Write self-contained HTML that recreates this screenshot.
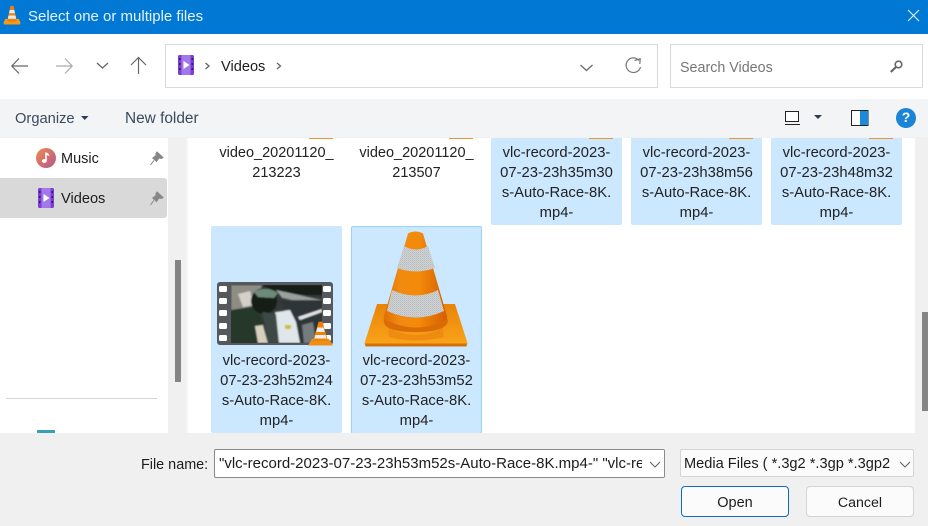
<!DOCTYPE html>
<html><head><meta charset="utf-8"><style>
html,body{margin:0;padding:0}
body{width:928px;height:526px;position:relative;overflow:hidden;background:#fff;font-family:"Liberation Sans",sans-serif;color:#1c1c1c;font-size:14.500px}
.a{position:absolute}
.t{position:absolute;white-space:nowrap;line-height:20px}
.tile{position:absolute;background:#cce8ff;border-radius:2px}
.c{position:absolute;width:131px;text-align:center;line-height:20px;font-size:14.800px;white-space:nowrap;color:#222}
svg{position:absolute;overflow:visible}
</style></head><body>
<div class="a" style="left:0;top:0;width:928px;height:34px;background:#0078d4"></div>
<svg style="left:0;top:0" width="928" height="34">
<path d="M8 19 L5 19 L3.500 23 L4 24.500 L20 24.500 L20.500 23 L19 19 L16 19Z" fill="#f39a1a"/><path d="M10.500 6 Q12 5.400 13.500 6 L16.800 21 Q12 23 7.200 21Z" fill="#f08208"/><path d="M9.700 10 L14.300 10 L15 13.200 L9 13.200Z M8.500 15.500 L15.500 15.500 L16.200 18.800 L7.800 18.800Z" fill="#e9e9e9"/>
<path d="M908 10 L919 21 M919 10 L908 21" stroke="#e8f3fb" stroke-width="1.100" fill="none"/></svg>
<div class="t" style="left:28px;top:7px;color:#e6f2fb;font-size:15px">Select one or multiple files</div>

<svg style="left:0;top:34px" width="170" height="65">
<path d="M12 32 H28 M19 24.500 L11.800 32 L19 39.500" stroke="#666" stroke-width="1.200" fill="none"/>
<path d="M56 32 H72 M65 24.500 L72.200 32 L65 39.500" stroke="#aaa" stroke-width="1.200" fill="none"/>
<path d="M97 29 L102.500 34 L108 29" stroke="#666" stroke-width="1.300" fill="none"/>
<path d="M138.500 40 V24 M131 31 L138.500 23.500 L146 31" stroke="#666" stroke-width="1.200" fill="none"/></svg>
<div class="a" style="left:165px;top:44px;width:491px;height:42px;border:1px solid #d9d9d9"></div>
<svg style="left:178px;top:55px" width="16" height="20"><rect width="16" height="20" rx="1.500" fill="#7c3fd6"/><rect x="3.500" width="9" height="20" fill="#a578ea"/><path d="M5.500 6 L11.500 10 L5.500 14Z" fill="#fff"/><path d="M1 3h1.500v2H1zM1 8h1.500v2H1zM1 13h1.500v2H1zM13.500 3h1.500v2h-1.500zM13.500 8h1.500v2h-1.500zM13.500 13h1.500v2h-1.500z" fill="#2e1a66"/></svg>
<svg style="left:200px;top:56px" width="90" height="20"><path d="M5.500 7 L9 10 L5.500 13" stroke="#666" stroke-width="1.300" fill="none"/><path d="M77 7 L80.500 10 L77 13" stroke="#666" stroke-width="1.300" fill="none"/></svg>
<div class="t" style="left:221px;top:57px;font-size:14.600px">Videos</div>
<svg style="left:575px;top:53px" width="70" height="28"><path d="M5.500 12 L11.500 17.500 L17.500 12" stroke="#666" stroke-width="1.200" fill="none"/><path d="M64 7.500 A7.300 7.300 0 1 0 65.500 14" stroke="#777" stroke-width="1.200" fill="none"/><path d="M59.500 7.500 L65.200 5.800 L64.800 11" stroke="#777" stroke-width="1.200" fill="none"/></svg>
<div class="a" style="left:670px;top:44px;width:251px;height:42px;border:1px solid #d9d9d9"></div>
<div class="t" style="left:680px;top:58px;color:#767676;font-size:14.300px">Search Videos</div>
<svg style="left:888px;top:58px" width="18" height="18"><circle cx="10.500" cy="6.500" r="3.300" stroke="#666" stroke-width="1.600" fill="none"/><path d="M8 9 L2.800 14" stroke="#666" stroke-width="2.200"/></svg>

<div class="a" style="left:0;top:99px;width:928px;height:38px;background:#f3f4f6"></div>
<div class="t" style="left:15px;top:109px;color:#3b4a5c;font-size:14.700px">Organize</div>
<svg style="left:80px;top:115px" width="10" height="6"><path d="M1 1 H8.500 L4.750 5Z" fill="#2b3a55"/></svg>
<div class="t" style="left:125px;top:109px;color:#3b4a5c;font-size:15.400px">New folder</div>
<svg style="left:784px;top:109px" width="130" height="22">
<rect x="1.500" y="2.500" width="13" height="10" fill="#fff" stroke="#222"/><path d="M1 15.500 H16" stroke="#222"/>
<path d="M30 6 H38 L34 10Z" fill="#2b3a55"/>
<rect x="67.500" y="1.500" width="16.500" height="15" fill="#fff" stroke="#222"/><rect x="76" y="2" width="8" height="14" fill="#1c8ad8"/>
<circle cx="122" cy="9" r="10" fill="#1a84d6"/></svg>
<div class="t" style="left:901px;top:107px;width:10px;text-align:center;color:#fff;font-size:14px;font-weight:bold">?</div>

<div class="a" style="left:168px;top:137px;width:20px;height:296px;background:#f0f0f0"></div>
<div class="a" style="left:186px;top:137px;width:2px;height:296px;background:#f6f6f6"></div>
<div class="a" style="left:175px;top:260px;width:6px;height:122px;background:#858585"></div>
<div class="a" style="left:0;top:178px;width:167px;height:40px;background:#d9d9d9;border-radius:0 3px 3px 0"></div>
<svg style="left:36px;top:148px" width="20" height="20"><defs><linearGradient id="m" x1="0" y1="0" x2="1" y2="1"><stop offset="0" stop-color="#ef8a4e"/><stop offset="1" stop-color="#b4578f"/></linearGradient></defs><circle cx="10" cy="10" r="10" fill="url(#m)"/><path d="M10 4.500 V12.500" stroke="#fff" stroke-width="1.600"/><ellipse cx="8.300" cy="13" rx="2.400" ry="1.900" fill="#fff"/><path d="M10 4.500 Q13 5 13.500 8 L10.500 7Z" fill="#fff"/></svg>
<div class="t" style="left:61px;top:149px;font-size:14.500px">Music</div>
<svg style="left:149px;top:151px" width="16" height="16"><path d="M8 1 L14 6.500 L12.500 7.500 L10 7 L7.500 10.500 L3.800 7 L7 4.500 L7 2.500Z M4.800 9.500 L1.500 14" fill="#878787" stroke="#878787" stroke-width="1"/></svg>
<svg style="left:38px;top:188px" width="16" height="20"><rect width="16" height="20" rx="1.500" fill="#7c3fd6"/><rect x="3.500" width="9" height="20" fill="#a578ea"/><path d="M5.500 6 L11.500 10 L5.500 14Z" fill="#fff"/><path d="M1 3h1.500v2H1zM1 8h1.500v2H1zM1 13h1.500v2H1zM13.500 3h1.500v2h-1.500zM13.500 8h1.500v2h-1.500zM13.500 13h1.500v2h-1.500z" fill="#2e1a66"/></svg>
<div class="t" style="left:61px;top:189px;font-size:14.600px">Videos</div>
<svg style="left:149px;top:191px" width="16" height="16"><path d="M8 1 L14 6.500 L12.500 7.500 L10 7 L7.500 10.500 L3.800 7 L7 4.500 L7 2.500Z M4.800 9.500 L1.500 14" fill="#878787" stroke="#878787" stroke-width="1"/></svg>
<div class="a" style="left:6px;top:398px;width:151px;height:1px;background:#d4d4d4"></div>
<div class="a" style="left:37px;top:430px;width:18px;height:3px;background:#3a9fb5"></div>

<div class="tile" style="left:491px;top:137px;width:131px;height:88px"></div>
<div class="tile" style="left:631px;top:137px;width:131px;height:88px"></div>
<div class="tile" style="left:771px;top:137px;width:131px;height:88px"></div>
<div class="a" style="left:309px;top:137px;width:24px;height:2px;background:#e8983a"></div>
<div class="a" style="left:449px;top:137px;width:24px;height:2px;background:#e8983a"></div>
<div class="a" style="left:589px;top:137px;width:24px;height:2px;background:#e8983a"></div>
<div class="a" style="left:729px;top:137px;width:24px;height:2px;background:#e8983a"></div>
<div class="a" style="left:869px;top:137px;width:24px;height:2px;background:#e8983a"></div>

<div class="c" style="left:211px;top:143px;font-size:14.500px">video_20201120_<br>213223</div>
<div class="c" style="left:351px;top:143px;font-size:14.500px">video_20201120_<br>213507</div>
<div class="c" style="left:491px;top:143px">vlc-record-2023-<br>07-23-23h35m30<br>s-Auto-Race-8K.<br>mp4-</div>
<div class="c" style="left:631px;top:143px">vlc-record-2023-<br>07-23-23h38m56<br>s-Auto-Race-8K.<br>mp4-</div>
<div class="c" style="left:771px;top:143px">vlc-record-2023-<br>07-23-23h48m32<br>s-Auto-Race-8K.<br>mp4-</div>

<div class="tile" style="left:211px;top:226px;width:131px;height:207px"></div>
<div class="tile" style="left:351px;top:226px;width:129px;height:206px;border:1px solid #99d1ff"></div>

<svg style="left:0;top:0" width="928" height="526">
<defs><filter id="b"><feGaussianBlur stdDeviation="0.9"/></filter>
<clipPath id="ci"><rect x="231" y="285" width="91" height="58"/></clipPath>
<linearGradient id="o" x1="0" y1="0" x2="1" y2="0"><stop offset="0" stop-color="#e07005"/><stop offset=".25" stop-color="#f08a10"/><stop offset=".55" stop-color="#f48a0a"/><stop offset="1" stop-color="#d55f02"/></linearGradient>
<linearGradient id="p" x1="0" y1="0" x2="0" y2="1"><stop offset="0" stop-color="#e88408"/><stop offset="1" stop-color="#fba51c"/></linearGradient>
<pattern id="d" width="2" height="2" patternUnits="userSpaceOnUse"><rect width="2" height="2" fill="#cfd2d2"/><rect width="1" height="1" fill="#b8bcbc"/><rect x="1" y="1" width="1" height="1" fill="#c2c6c6"/></pattern></defs>
<rect x="217" y="282" width="116" height="63" rx="3" fill="#55595e"/>
<g fill="#fff"><rect x="219" y="286" width="8" height="6" rx="1.500"/><rect x="219" y="298" width="8" height="6" rx="1.500"/><rect x="219" y="310" width="8" height="6" rx="1.500"/><rect x="219" y="323" width="8" height="6" rx="1.500"/><rect x="219" y="335" width="8" height="6" rx="1.500"/>
<rect x="323" y="286" width="8" height="6" rx="1.500"/><rect x="323" y="298" width="8" height="6" rx="1.500"/><rect x="323" y="310" width="8" height="6" rx="1.500"/><rect x="323" y="323" width="8" height="6" rx="1.500"/><rect x="323" y="335" width="8" height="6" rx="1.500"/></g>
<g clip-path="url(#ci)"><rect x="231" y="285" width="91" height="58" fill="#34393a"/>
<g filter="url(#b)">
<path d="M231 285 H262 L258 310 L231 312Z" fill="#8e8c84"/>
<path d="M238 294 L250 291 L254 305 L243 307Z" fill="#d2d0c8"/>
<path d="M262 285 H322 V295 L282 295Z" fill="#121a16"/>
<path d="M276 290 L322 300 V306 L282 298Z" fill="#9aa09e"/>
<path d="M280 300 H322 V343 H300Z" fill="#2f3537"/>
<path d="M298 317 L322 309 V312 L300 320Z" fill="#e2e6e6"/>
<path d="M231 310 L256 306 L264 325 L262 343 H231Z" fill="#25382a"/>
<ellipse cx="264" cy="301" rx="13" ry="13" fill="#141c18"/>
<path d="M254 292 Q266 285 278 293 L274 298 L258 297Z" fill="#6e8a78"/>
<path d="M275 312 L290 310 L296 322 L300 343 H277Z" fill="#e0e7ea"/>
<path d="M262 312 L276 314 L279 343 H269Z" fill="#3c4a44"/>
<rect x="285" y="325" width="6" height="4" fill="#d0bb2c"/>
<path d="M255 326 L263 325 L268 343 H258Z" fill="#d8d0bc"/>
<path d="M302 325 L313 322 L316 343 H304Z" fill="#747c80"/>
</g></g>
<path d="M308 345.500 L312 339 H329 L333 345.500Z" fill="#ef8e14"/>
<path d="M318.500 322 Q320.500 321 322.500 322 L328 341 H313Z" fill="#ee8208"/>
<path d="M317.500 327.500 H323.500 L324.700 332 H316.300Z M315.500 335 H325.500 L326.500 338.500 H314.500Z" fill="#efefef"/>

<path d="M377 304 H455 L467.500 343 L466.500 346.500 H365.500 L364.500 343Z" fill="url(#p)"/>
<path d="M365 343.500 H467 L466.300 346.500 H365.700Z" fill="#d2700a"/>
<path d="M388 328 Q416 342 443 328 L444 337 Q416 344 389 337Z" fill="#ee8c12"/>
<path d="M408 233.500 Q415.500 229.500 423 233.500 L447 316 Q449 332 416 332 Q381 332 384 316Z" fill="url(#o)"/>
<path d="M384 319 Q416 336 448 319 Q449 332 416 332 Q381 332 384 319Z" fill="#da6c08"/>
<path d="M404 246 Q416 253 428 246 L435 268 Q416 275 397 268Z" fill="url(#d)"/>
<path d="M392 290 Q416 301 438 290 L444 311 Q416 324 387 311Z" fill="url(#d)"/>
</svg>
<div class="c" style="left:211px;top:351px">vlc-record-2023-<br>07-23-23h52m24<br>s-Auto-Race-8K.<br>mp4-</div>
<div class="c" style="left:351px;top:351px">vlc-record-2023-<br>07-23-23h53m52<br>s-Auto-Race-8K.<br>mp4-</div>

<div class="a" style="left:915px;top:137px;width:13px;height:296px;background:#f0f0f0"></div>
<div class="a" style="left:922px;top:312px;width:6px;height:99px;background:#858585"></div>
<div class="a" style="left:0;top:137px;width:928px;height:1px;background:#f1f1f1"></div>

<div class="a" style="left:0;top:433px;width:928px;height:93px;background:#f0f0f0"></div>
<div class="t" style="left:141px;top:455px;font-size:14.400px">File name:</div>
<div class="a" style="left:214px;top:449px;width:449px;height:27px;background:#fff;border:1px solid #8a8a8a;border-radius:2px;overflow:hidden"><div class="t" style="left:4px;top:4px;font-size:15px">"vlc-record-2023-07-23-23h53m52s-Auto-Race-8K.mp4-" "vlc-record-2023</div><div class="a" style="right:0;top:0;width:22px;height:27px;background:#fff"></div></div>
<svg style="left:649px;top:461px" width="14" height="8"><path d="M1 1 L6 6 L11 1" stroke="#666" stroke-width="1.100" fill="none"/></svg>
<div class="a" style="left:680px;top:449px;width:232px;height:26px;background:#fbfbfb;border:1px solid #d4d4d4;border-radius:2px;overflow:hidden"><div class="t" style="left:3px;top:4px;font-size:14.600px">Media Files ( *.3g2 *.3gp *.3gp2</div></div>
<svg style="left:899px;top:461px" width="14" height="8"><path d="M1 1 L6 6 L11 1" stroke="#666" stroke-width="1.100" fill="none"/></svg>
<div class="a" style="left:681px;top:486px;width:106px;height:29px;background:#fbfbfb;border:1px solid #0f6cbd;border-radius:4px;text-align:center;line-height:32px;font-size:14.500px">Open</div>
<div class="a" style="left:806px;top:486px;width:106px;height:29px;background:#fbfbfb;border:1px solid #d4d4d4;border-radius:4px;text-align:center;line-height:32px;font-size:14.200px">Cancel</div>
</body></html>
